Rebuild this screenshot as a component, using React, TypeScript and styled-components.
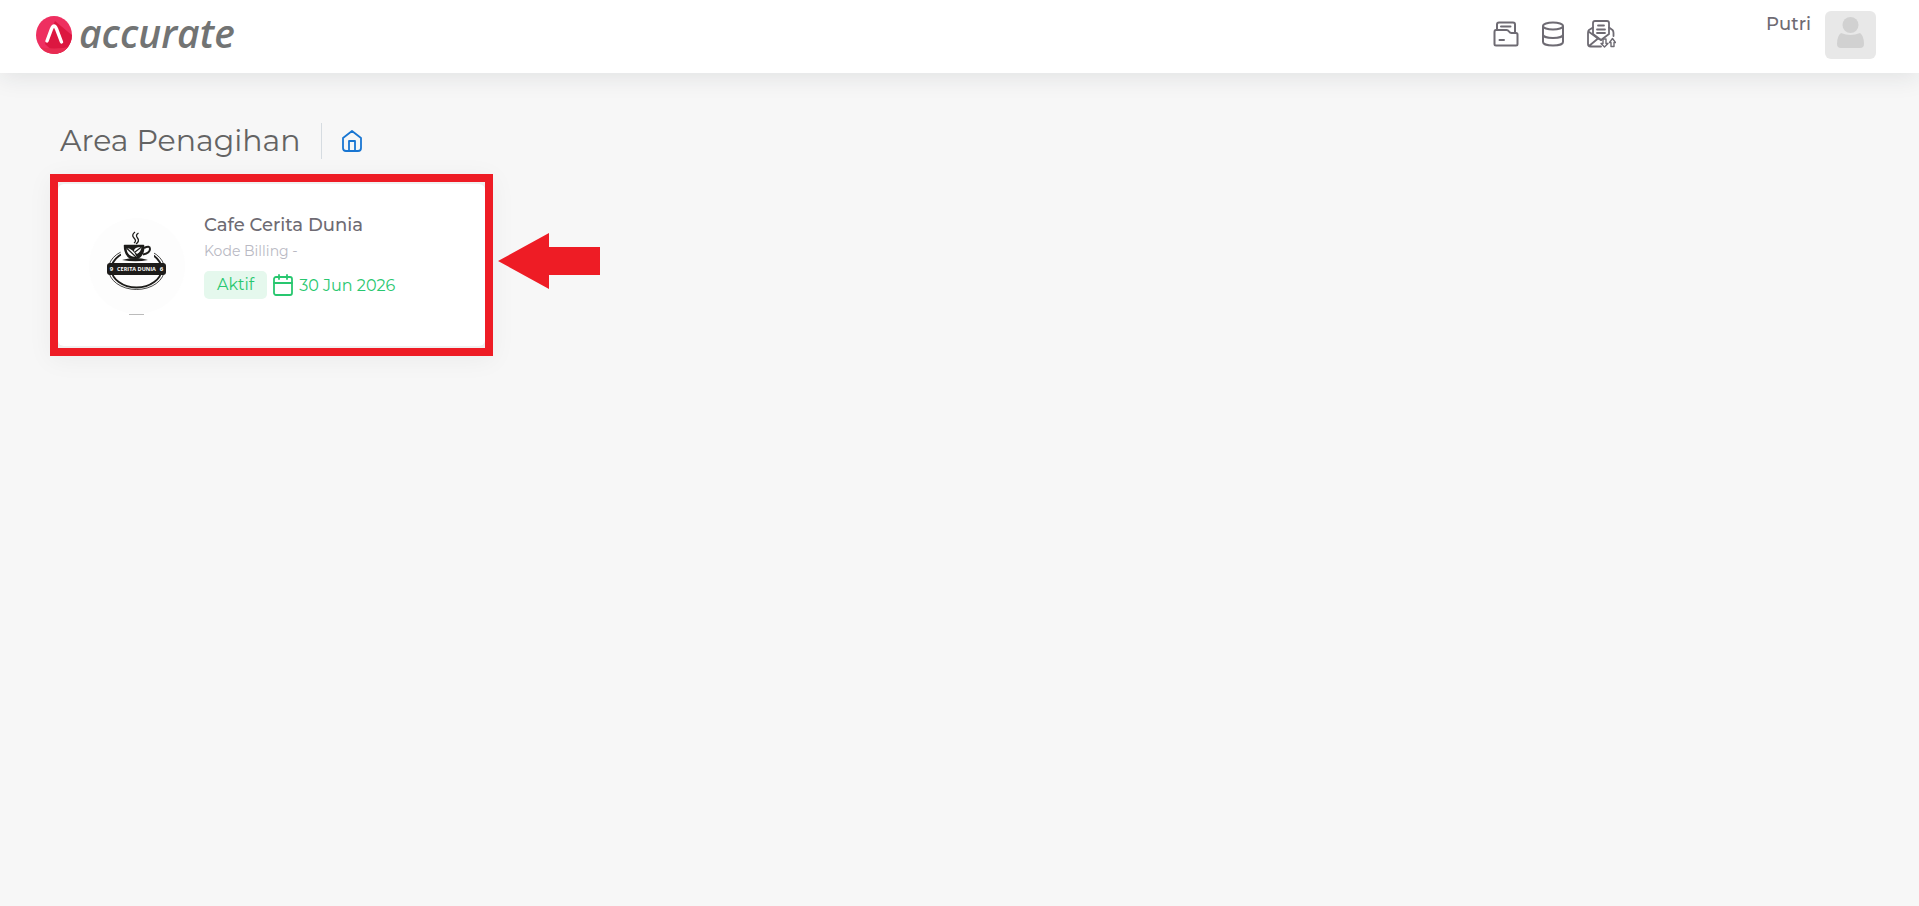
import React from 'react'
import styled, { createGlobalStyle } from 'styled-components'

const GlobalStyle = createGlobalStyle`
  * {
    box-sizing: border-box;
  }

  body {
    margin: 0;
    background: #f7f7f7;
    color: #6e6b73;
    font-family: 'Montserrat', Inter, sans-serif;
  }
`

const Header = styled.header`
  align-items: center;
  background: #fff;
  box-shadow: 0 4px 24px rgba(34, 41, 47, 0.1);
  display: flex;
  height: 73px;
  justify-content: space-between;
  padding: 0 43px 3px 36px;
`

const Brand = styled.a`
  align-items: center;
  color: #727474;
  display: flex;
  font-family: 'Open Sans', sans-serif;
  font-size: 39px;
  font-style: italic;
  font-weight: 600;
  gap: 6px;
  line-height: 48px;
  text-decoration: none;
`

const BrandName = styled.span`
  padding-bottom: 4px;
`

const HeaderRight = styled.div`
  align-items: center;
  display: flex;
`

const Nav = styled.nav`
  align-items: center;
  display: flex;
  gap: 23px;
  margin-right: 150px;
  padding-bottom: 2px;
`

const IconButton = styled.button`
  background: transparent;
  border: 0;
  color: #6e6b73;
  cursor: pointer;
  display: flex;
  padding: 0;
`

const UserButton = styled.button`
  align-items: flex-start;
  background: transparent;
  border: 0;
  color: #6e6b73;
  cursor: pointer;
  display: flex;
  font-family: inherit;
  font-size: 18px;
  font-weight: 500;
  gap: 14px;
  line-height: 26px;
  padding: 0;
`

const Avatar = styled.span`
  background: #e8e8e8;
  border-radius: 6px;
  display: flex;
  height: 48px;
  justify-content: center;
  padding-top: 6px;
  width: 51px;
`

const Main = styled.main`
  padding: 50px;
`

const Breadcrumb = styled.div`
  align-items: center;
  display: flex;
  height: 36px;
  margin-bottom: 15px;
  padding-left: 10px;
`

const Title = styled.h1`
  border-right: 1px solid #d6dce1;
  color: #636363;
  font-size: 30px;
  font-weight: 400;
  line-height: 36px;
  margin: 0;
  padding-right: 20px;
`

const HomeLink = styled.a`
  color: #1976d2;
  display: flex;
  margin-left: 20px;
`

const Callout = styled.div`
  align-items: flex-start;
  display: flex;
  gap: 5px;
`

const Highlight = styled.div`
  background: #f0f0f0;
  border: 8px solid #ee1c25;
  box-shadow: 0 4px 24px rgba(34, 41, 47, 0.05);
  padding: 2px 0;
  width: 443px;
`

const Card = styled.a`
  background: #fff;
  border-radius: 6px;
  color: inherit;
  display: flex;
  gap: 18px;
  padding: 28px 30px 31px;
  text-decoration: none;
`

const Details = styled.div`
  display: flex;
  flex-direction: column;
`

const CompanyName = styled.h2`
  font-size: 18px;
  font-weight: 500;
  line-height: 26px;
  margin: 0;
`

const BillingCode = styled.span`
  color: #b9b9c3;
  font-size: 14px;
  line-height: 26px;
`

const Status = styled.div`
  align-items: center;
  color: #28c76f;
  display: flex;
  font-size: 16px;
  gap: 6px;
  margin-top: 7px;
`

const Badge = styled.span`
  background: #e5f8ed;
  border-radius: 5px;
  line-height: 28px;
  padding: 0 13px;
`

const Arrow = styled.svg`
  margin-top: 58px;
`

const BrandMark = () => (
  <svg width="37" height="38" viewBox="0 0 37 38">
    <defs>
      <clipPath id="mark">
        <ellipse cx="18" cy="19" rx="18" ry="19" />
      </clipPath>
    </defs>
    <g clipPath="url(#mark)">
      <rect width="37" height="38" fill="#ee2f60" />
      <path d="M19 5 37 20V38H20L9 28Z" fill="#dc1740" />
      <path d="M0 30q18 5 37 0v8H0z" fill="#e82c52" />
    </g>
    <path d="M11 25 15.500 13Q18 7 20.500 13L25.500 26" fill="none" stroke="#fff" strokeWidth="3.400" strokeLinecap="round" />
  </svg>
)

const FolderIcon = () => (
  <svg width="26" height="26" viewBox="0 0 26 26" fill="none" stroke="currentColor" strokeWidth="2" strokeLinecap="round" strokeLinejoin="round">
    <path d="M4 9V3.500Q4 1.500 6 1.500H20Q22 1.500 22 3.500V11M8 5.500H17.500" />
    <path d="M4 9H13.500Q15 9 16 10.500T18.500 12H23Q24.500 12 24.500 13.500V23Q24.500 24.500 23 24.500H3Q1.500 24.500 1.500 23V11Q1.500 9 3 9H4M6.500 19H11" />
  </svg>
)

const DatabaseIcon = () => (
  <svg width="22" height="26" viewBox="0 0 22 26" fill="none" stroke="currentColor" strokeWidth="2">
    <ellipse cx="11" cy="5" rx="10" ry="3.500" />
    <path d="M1 5V21C1 23 5 24.500 11 24.500S21 23 21 21V5M1 13.500C1 15.500 5 17 11 17S21 15.500 21 13.500" />
  </svg>
)

const MailIcon = () => (
  <svg width="29" height="28" viewBox="0 0 29 28" fill="none" stroke="currentColor" strokeWidth="1.800" strokeLinecap="round" strokeLinejoin="round">
    <path d="M6 14V3Q6 1 8 1H20Q22 1 22 3V14L14 20Z" />
    <path d="M11 5.500H17M10 9.500H18M10 13H18" />
    <path d="M6 7.500 2 10Q1 11 1 13V24Q1 26.500 3.500 26.500H14M1.500 11.500 11 18.500 2 26M22 7.500 25.500 10Q26.500 11 26.500 13V16M14 20 10 18" />
    <path d="M16 19H19V23.500H21L17.500 27 14 23.500H16Z" fill="#fff" strokeWidth="1.400" />
    <path d="M24 26.500H27V22.500H28.400L25.500 18.500 22.500 22.500H24Z" fill="#fff" strokeWidth="1.400" />
  </svg>
)

const HomeIcon = () => (
  <svg width="20" height="22" viewBox="0 0 20 22" fill="none" stroke="currentColor" strokeWidth="1.800" strokeLinejoin="round">
    <path d="M1 8 10 1 19 8V18Q19 21 16 21H4Q1 21 1 18ZM7 21V11H13V21" />
  </svg>
)

const CalendarIcon = () => (
  <svg width="20" height="22" viewBox="0 0 20 22" fill="none" stroke="currentColor" strokeWidth="1.800" strokeLinecap="round">
    <rect x="1" y="3" width="18" height="18" rx="2" />
    <path d="M1 9H19M6 1V5M14 1V5" />
  </svg>
)

const CafeLogo = () => (
  <svg width="98" height="103" viewBox="0 0 98 103" role="img" aria-label="Cerita Dunia">
    <circle cx="49" cy="54" r="48" fill="#fdfdfd" />
    <g fill="none" stroke="#1d1c1a">
      <ellipse cx="48.500" cy="57" rx="28" ry="20.500" strokeWidth="0.800" />
      <ellipse cx="48.500" cy="57" rx="25" ry="18.500" strokeWidth="1.800" />
    </g>
    <path d="M31 30H66V46H62L60 49H34Z" fill="#fdfdfd" />
    <path d="M36.500 33.500H55.500V38Q55 43 50 46H42Q36.500 42 36.500 33.500Z" fill="#1d1c1a" stroke="#1d1c1a" strokeWidth="1.500" strokeLinejoin="round" />
    <path d="M38.500 36Q46 37 48.500 45Q39 45 38.500 36ZM53.500 35Q46 35 46 39L49 42Q53 40 53.500 35Z" fill="#fdfdfd" />
    <path d="M38.500 36 48 45M53.500 35 47 40" stroke="#1d1c1a" strokeWidth="1.200" />
    <path d="M56 36Q62 33 62 37Q62 41 55 42.500" fill="none" stroke="#1d1c1a" strokeWidth="2" />
    <path d="M34 48Q48 44 60 48Q48 50.500 34 48Z" fill="#1d1c1a" />
    <path d="M47 20Q43 23 46 26T46 31M50.500 21Q47 23 49.500 26T48 32" fill="none" stroke="#1d1c1a" strokeWidth="1.300" />
    <rect x="19" y="51" width="59" height="12" rx="3" fill="#1d1c1a" />
    <g fill="#fff" fontFamily="Open Sans" fontWeight="700" textAnchor="middle">
      <text x="48.500" y="59" fontSize="5.500">CERITA DUNIA</text>
      <text x="23.500" y="59" fontSize="6">9</text>
      <text x="73.500" y="59" fontSize="6">6</text>
    </g>
    <path d="M41 102.500H56" fill="none" stroke="#bbb" />
  </svg>
)

const UserIcon = () => (
  <svg width="27" height="32" viewBox="0 0 27 32" fill="#d1d1d1">
    <circle cx="13.500" cy="8" r="8" />
    <path d="M4 16Q13.500 20 23 16Q27 19 27 27Q27 31 23 31H4Q0 31 0 27Q0 19 4 16Z" />
  </svg>
)

const App: React.FC = () => (
  <>
    <GlobalStyle />
    <Header>
      <Brand href="#">
        <BrandMark />
        <BrandName>accurate</BrandName>
      </Brand>
      <HeaderRight>
        <Nav>
          <IconButton aria-label="Billing">
            <FolderIcon />
          </IconButton>
          <IconButton aria-label="Database">
            <DatabaseIcon />
          </IconButton>
          <IconButton aria-label="Transfer">
            <MailIcon />
          </IconButton>
        </Nav>
        <UserButton>
          Putri
          <Avatar>
            <UserIcon />
          </Avatar>
        </UserButton>
      </HeaderRight>
    </Header>
    <Main>
      <Breadcrumb>
        <Title>Area Penagihan</Title>
        <HomeLink href="#" aria-label="Home">
          <HomeIcon />
        </HomeLink>
      </Breadcrumb>
      <Callout>
        <Highlight>
          <Card href="#">
            <CafeLogo />
            <Details>
              <CompanyName>Cafe Cerita Dunia</CompanyName>
              <BillingCode>Kode Billing -</BillingCode>
              <Status>
                <Badge>Aktif</Badge>
                <CalendarIcon />
                <span>30 Jun 2026</span>
              </Status>
            </Details>
          </Card>
        </Highlight>
        <Arrow width="102" height="58" viewBox="0 0 102 58" aria-hidden="true">
          <path d="M0 29 51 1V15H102V43H51V57Z" fill="#ee1c25" />
        </Arrow>
      </Callout>
    </Main>
  </>
)

export default App
